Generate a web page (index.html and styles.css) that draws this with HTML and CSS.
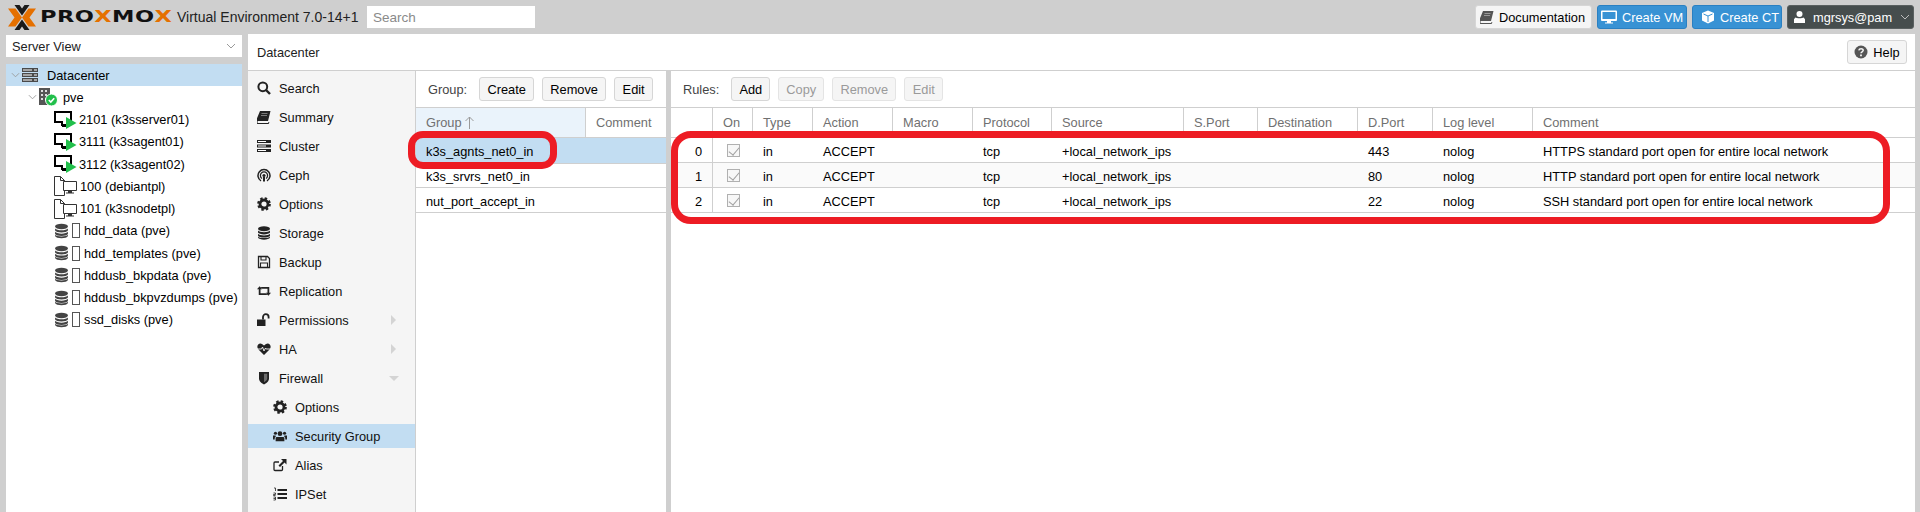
FILE: index.html
```html
<!DOCTYPE html>
<html lang="en">
<head>
  <meta charset="UTF-8" />
  <title>pve - Proxmox Virtual Environment</title>
  <link rel="stylesheet" href="styles.css">
</head>
<body>

<!-- Icon set -->
<svg class="sprite" xmlns="http://www.w3.org/2000/svg">
  <symbol id="i-search" viewBox="0 0 14 14"><circle cx="5.800" cy="5.800" r="4.400" fill="none" stroke="currentColor" stroke-width="2"/><path d="M9 9l4 4" stroke="currentColor" stroke-width="2.400"/></symbol>
  <symbol id="i-book" viewBox="0 0 14 14"><path d="M3 1h10.500l-2.500 10h-9.500c-1.500 0-1.500 2 0 2h9.500l.5-1 1 .5-1 1.500h-10.500c-2 0-2.500-2-2-3.500z" fill="currentColor"/><path d="M4.500 3.500h6M4 5.500h6" stroke="#fff" stroke-width=".8" opacity=".5"/></symbol>
  <symbol id="i-cluster" viewBox="0 0 14 14"><path d="M0 1h14v3h-14zM0 5.500h14v3h-14zM0 10h14v3h-14z" fill="currentColor"/><path d="M1 2.500h8M1 7h8M1 11.500h8" stroke="#fff" stroke-width="1"/></symbol>
  <symbol id="i-ceph" viewBox="0 0 14 14"><g fill="none" stroke="currentColor"><path d="M4 12.800a6 6 0 1 1 6 0" stroke-width="1.500"/><path d="M5 10.500a3.600 3.600 0 1 1 4 0" stroke-width="1.300"/></g><circle cx="7" cy="7.500" r="1.600" fill="currentColor"/><path d="M6 9h2v4.500h-2z" fill="currentColor"/></symbol>
  <symbol id="i-gear" viewBox="0 0 14 14"><circle cx="7" cy="7" r="4" fill="none" stroke="currentColor" stroke-width="2.800"/><circle cx="7" cy="7" r="5.700" fill="none" stroke="currentColor" stroke-width="2.300" stroke-dasharray="2.400 2.080"/></symbol>
  <symbol id="i-db" viewBox="0 0 14 14"><g fill="currentColor"><ellipse cx="7" cy="2.800" rx="6" ry="2.500"/><path d="M1 4.600c1.500 2.200 10.500 2.200 12 0v2c-1 2.400-11 2.400-12 0z"/><path d="M1 7.800c1.500 2.200 10.500 2.200 12 0v2c-1 2.400-11 2.400-12 0z"/><path d="M1 10.600c1.500 2 10.500 2 12 0v1c-1 2.800-11 2.800-12 0z"/></g></symbol>
  <symbol id="i-floppy" viewBox="0 0 14 14"><path d="M1.500 1.500h9l2 2v9h-11z" fill="none" stroke="currentColor" stroke-width="1.300"/><path d="M4 1.500h5v3.500h-5zM3.500 8h7v4.500h-7z" fill="none" stroke="currentColor" stroke-width="1.100"/></symbol>
  <symbol id="i-retweet" viewBox="0 0 16 14"><path d="M0 5l3-3.500 3 3.500h-2v4.500h6l2 2h-10v-6.500zM16 9l-3 3.500-3-3.500h2v-4.500h-6l-2-2h10v6.500z" fill="currentColor"/></symbol>
  <symbol id="i-unlock" viewBox="0 0 14 14"><path d="M0 6.500h8.500v6.500h-8.500z" fill="currentColor"/><path d="M6 6.500v-2.500a2.800 2.800 0 0 1 5.600 0v1.500" fill="none" stroke="currentColor" stroke-width="1.800"/></symbol>
  <symbol id="i-heart" viewBox="0 0 14 14"><path d="M7 13l-5.500-5.500c-3-3.500 .5-7.500 3.500-5.500l2 1.500 2-1.500c3-2 6.500 2 3.500 5.500z" fill="currentColor"/><path d="M0 7h4.500l1-2 1.500 4 1.500-3 .7 1h5" fill="none" stroke="#f5f5f5" stroke-width=".9"/></symbol>
  <symbol id="i-shield" viewBox="0 0 14 14"><path d="M2 1h10v6.500c0 3-3 5-5 6-2-1-5-3-5-6z" fill="currentColor"/><path d="M7 2.800h3.200v4.700c0 1.800-1.800 3-3.200 3.800z" fill="#f5f5f5" opacity=".35"/></symbol>
  <symbol id="i-users" viewBox="0 0 16 14"><g fill="currentColor"><circle cx="8" cy="4.300" r="2.700"/><circle cx="2.800" cy="3.800" r="1.800"/><circle cx="13.200" cy="3.800" r="1.800"/><path d="M4 8h8l1 1v4h-10v-4z"/><path d="M0 6.500h3l.2 1-1.200 1.500v2h-2zM16 6.500h-3l-.2 1 1.200 1.500v2h2z"/></g></symbol>
  <symbol id="i-external" viewBox="0 0 14 14"><path d="M9.500 8v3.500a1 1 0 0 1-1 1h-6.500a1 1 0 0 1-1-1v-6.500a1 1 0 0 1 1-1h4" fill="none" stroke="currentColor" stroke-width="1.300"/><path d="M8 1h5.500v5.500l-2-2-4.500 4.500-1.500-1.500 4.500-4.500z" fill="currentColor"/></symbol>
  <symbol id="i-list" viewBox="0 0 14 14"><path d="M4.500 2h9.500v2h-9.500zM4.500 6h9.500v2h-9.500zM4.500 10h9.500v2h-9.500z" fill="currentColor"/><path d="M1 1h1.500v3M.5 6h2v1.500h-2v1h2M.5 10h2v3h-2M.5 11.500h2" fill="none" stroke="currentColor" stroke-width=".8"/></symbol>
  <symbol id="i-help" viewBox="0 0 14 14"><circle cx="7" cy="7" r="6.500" fill="currentColor"/><path d="M4.800 5.300c.4-2.200 4.400-2.200 4.400 0 0 1.500-2.200 1.500-2.200 3" fill="none" stroke="#f5f5f5" stroke-width="1.500"/><path d="M6.100 9.500h1.800v1.700h-1.800z" fill="#f5f5f5"/></symbol>
  <symbol id="i-desktop" viewBox="0 0 16 14"><path d="M1 .5h14a1 1 0 0 1 1 1v8.500a1 1 0 0 1-1 1h-5v1.500h2v1h-8v-1h2v-1.500h-5a1 1 0 0 1-1-1v-8.500a1 1 0 0 1 1-1zM1.500 2v7h13v-7z" fill="currentColor"/></symbol>
  <symbol id="i-cube" viewBox="0 0 14 14"><path d="M7 .5l6 2.500v7.500l-6 3-6-3v-7.500z" fill="currentColor"/><path d="M2.500 4l4.500 2 4.500-2M7 6v6" fill="none" stroke="#3892d4" stroke-width="1"/></symbol>
  <symbol id="i-user" viewBox="0 0 12 14"><circle cx="6" cy="3.800" r="3.300" fill="currentColor"/><path d="M1.500 7.500c1 1 8 1 9 0l1.500 2v4h-12v-4z" fill="currentColor"/></symbol>
  <symbol id="i-datacenter" viewBox="0 0 16 14"><path d="M0 0h16v4h-16zM0 5h16v4h-16zM0 10h16v4h-16z" fill="#4a4a4a"/><path d="M1 2h9M1 7h9M1 12h9M12 2h3M12 7h3M12 12h3" stroke="#fff" stroke-width="1"/></symbol>
  <symbol id="i-node" viewBox="0 0 20 18"><path d="M1 0h11v17h-11z" fill="#555"/><path d="M3 2h2v2h-2zM7 2h2v2h-2zM3 6h2v2h-2zM7 6h2v2h-2zM3 10h2v2h-2zM7 10h2v2h-2z" fill="#ddd"/><circle cx="13.500" cy="12" r="6" fill="#21bf4b" stroke="#fff"/><path d="M10.800 12l2 2 3.400-3.700" fill="none" stroke="#fff" stroke-width="1.600"/></symbol>
  <symbol id="i-vm" viewBox="0 0 23 18"><path d="M1 1h16v10h-4v3h-5v-3h-7z" fill="none" stroke="#000" stroke-width="2"/><path d="M8 14h5v2h-5z" fill="#000"/><path d="M12 6l10.500 6-10.500 6z" fill="#21bf4b"/></symbol>
  <symbol id="i-template" viewBox="0 0 23 20"><path d="M.5 19.500v-19h6l4 4v15z" fill="#fff" stroke="#333"/><path d="M6.500 .5v4h4" fill="none" stroke="#333"/><path d="M9.500 5.500h13v9h-13z" fill="#fff" stroke="#333"/><path d="M14 14.500h4v2h2v1h-8v-1h2z" fill="#333"/></symbol>
  <symbol id="i-proxmark" viewBox="0 0 28 25"><path d="M0 3.500h7.500l6.500 9-6.500 9h-7.500l6.500-9zM28 3.500h-7.500l-6.500 9 6.500 9h7.500l-6.500-9z" fill="#e57000"/><path d="M6.500 0h5l2.500 3.500 2.500-3.500h5l-7.500 10.500zM6.500 25h5l2.500-3.500 2.500 3.500h5l-7.500-10.500z" fill="#1a1a1a"/></symbol>
  <symbol id="i-sort-up" viewBox="0 0 9 13"><path d="M4.500 13v-12M.5 5l4-4 4 4" fill="none" stroke="currentColor" stroke-width="1"/></symbol>
</svg>

<header class="topbar">
  <div class="brand">
    <svg class="brand-mark"><use href="#i-proxmark"/></svg>
    <div class="brand-name"><span>PRO<b>X</b>MO<b>X</b></span></div>
  </div>
  <div class="version">Virtual Environment 7.0-14+1</div>
  <input class="global-search" type="text" placeholder="Search" />
  <div class="top-actions">
    <button class="btn btn-docs"><svg class="ic book-ic"><use href="#i-book"/></svg>Documentation</button>
    <button class="btn btn-blue btn-vm"><svg class="ic ic-wide"><use href="#i-desktop"/></svg>Create VM</button>
    <button class="btn btn-blue btn-ct"><svg class="ic"><use href="#i-cube"/></svg>Create CT</button>
    <button class="btn btn-dark"><svg class="ic ic-user"><use href="#i-user"/></svg>mgrsys@pam<svg class="chev chev-light" viewBox="0 0 10 6"><path d="M1 1l4 4 4-4"/></svg></button>
  </div>
</header>

<div class="workspace">
  <!-- Resource tree -->
  <aside class="tree-panel">
    <div class="view-select">Server View<svg class="chev" viewBox="0 0 10 6"><path d="M1 1l4 4 4-4"/></svg></div>
    <ul class="tree">
      <li class="tree-row selected"><svg class="chev tree-chev dc-chev" viewBox="0 0 10 6"><path d="M1 1l4 4 4-4"/></svg><svg class="dc-ic"><use href="#i-datacenter"/></svg>Datacenter</li>
      <li class="tree-row"><svg class="chev tree-chev node-chev" viewBox="0 0 10 6"><path d="M1 1l4 4 4-4"/></svg><svg class="node-ic"><use href="#i-node"/></svg>pve</li>
      <li class="tree-row guest"><svg class="vm-ic"><use href="#i-vm"/></svg>2101 (k3sserver01)</li>
      <li class="tree-row guest"><svg class="vm-ic"><use href="#i-vm"/></svg>3111 (k3sagent01)</li>
      <li class="tree-row guest"><svg class="vm-ic"><use href="#i-vm"/></svg>3112 (k3sagent02)</li>
      <li class="tree-row guest"><svg class="tpl-ic"><use href="#i-template"/></svg>100 (debiantpl)</li>
      <li class="tree-row guest"><svg class="tpl-ic"><use href="#i-template"/></svg>101 (k3snodetpl)</li>
      <li class="tree-row guest"><svg class="st-ic"><use href="#i-db"/></svg><i class="st-box"></i>hdd_data (pve)</li>
      <li class="tree-row guest"><svg class="st-ic"><use href="#i-db"/></svg><i class="st-box"></i>hdd_templates (pve)</li>
      <li class="tree-row guest"><svg class="st-ic"><use href="#i-db"/></svg><i class="st-box"></i>hddusb_bkpdata (pve)</li>
      <li class="tree-row guest"><svg class="st-ic"><use href="#i-db"/></svg><i class="st-box"></i>hddusb_bkpvzdumps (pve)</li>
      <li class="tree-row guest"><svg class="st-ic"><use href="#i-db"/></svg><i class="st-box"></i>ssd_disks (pve)</li>
    </ul>
  </aside>

  <main class="content">
    <div class="content-head">
      <span>Datacenter</span>
      <button class="btn btn-help"><svg class="ic help-ic"><use href="#i-help"/></svg>Help</button>
    </div>

    <div class="content-body">
      <nav class="side-menu">
        <a class="menu-item"><svg><use href="#i-search"/></svg>Search</a>
        <a class="menu-item"><svg><use href="#i-book"/></svg>Summary</a>
        <a class="menu-item"><svg><use href="#i-cluster"/></svg>Cluster</a>
        <a class="menu-item"><svg><use href="#i-ceph"/></svg>Ceph</a>
        <a class="menu-item"><svg><use href="#i-gear"/></svg>Options</a>
        <a class="menu-item"><svg><use href="#i-db"/></svg>Storage</a>
        <a class="menu-item"><svg><use href="#i-floppy"/></svg>Backup</a>
        <a class="menu-item"><svg><use href="#i-retweet"/></svg>Replication</a>
        <a class="menu-item"><svg><use href="#i-unlock"/></svg>Permissions<i class="arrow-right"></i></a>
        <a class="menu-item"><svg><use href="#i-heart"/></svg>HA<i class="arrow-right"></i></a>
        <a class="menu-item"><svg><use href="#i-shield"/></svg>Firewall<i class="arrow-down"></i></a>
        <a class="menu-item sub"><svg><use href="#i-gear"/></svg>Options</a>
        <a class="menu-item sub active"><svg><use href="#i-users"/></svg>Security Group</a>
        <a class="menu-item sub"><svg><use href="#i-external"/></svg>Alias</a>
        <a class="menu-item sub"><svg><use href="#i-list"/></svg>IPSet</a>
      </nav>

      <section class="group-panel">
        <div class="toolbar">
          <span class="tool-label">Group:</span>
          <button class="btn tool-55">Create</button>
          <button class="btn tool-64">Remove</button>
          <button class="btn tool-39">Edit</button>
        </div>
        <table class="grid group-grid">
          <thead>
            <tr><th class="col-group">Group <svg class="sort-up"><use href="#i-sort-up"/></svg></th><th>Comment</th></tr>
          </thead>
          <tbody>
            <tr class="row-selected"><td colspan="2">k3s_agnts_net0_in</td></tr>
            <tr class="row-short"><td colspan="2">k3s_srvrs_net0_in</td></tr>
            <tr><td colspan="2">nut_port_accept_in</td></tr>
          </tbody>
        </table>
      </section>

      <section class="rules-panel">
        <div class="toolbar">
          <span class="tool-label">Rules:</span>
          <button class="btn tool-39">Add</button>
          <button class="btn tool-46" disabled>Copy</button>
          <button class="btn tool-64" disabled>Remove</button>
          <button class="btn tool-39" disabled>Edit</button>
        </div>
        <table class="grid rules-grid">
          <colgroup>
            <col class="c-num"><col class="c-on"><col class="c-type"><col class="c-action"><col class="c-macro"><col class="c-proto"><col class="c-source"><col class="c-sport"><col class="c-dest"><col class="c-dport"><col class="c-log"><col>
          </colgroup>
          <thead>
            <tr><th></th><th>On</th><th>Type</th><th>Action</th><th>Macro</th><th>Protocol</th><th>Source</th><th>S.Port</th><th>Destination</th><th>D.Port</th><th>Log level</th><th>Comment</th></tr>
          </thead>
          <tbody>
            <tr>
              <td class="num">0</td><td class="on"><i class="check"></i></td><td>in</td><td>ACCEPT</td><td></td><td>tcp</td><td>+local_network_ips</td><td></td><td></td><td>443</td><td>nolog</td><td>HTTPS standard port open for entire local network</td>
            </tr>
            <tr class="alt">
              <td class="num">1</td><td class="on"><i class="check"></i></td><td>in</td><td>ACCEPT</td><td></td><td>tcp</td><td>+local_network_ips</td><td></td><td></td><td>80</td><td>nolog</td><td>HTTP standard port open for entire local network</td>
            </tr>
            <tr>
              <td class="num">2</td><td class="on"><i class="check"></i></td><td>in</td><td>ACCEPT</td><td></td><td>tcp</td><td>+local_network_ips</td><td></td><td></td><td>22</td><td>nolog</td><td>SSH standard port open for entire local network</td>
            </tr>
          </tbody>
        </table>
      </section>
    </div>
  </main>
</div>

<!-- Red annotations drawn over the screenshot -->
<div class="mark mark-group"></div>
<div class="mark mark-rules"></div>

</body>
</html>
```

FILE: styles.css
```css
* {
  box-sizing: border-box;
}

html,
body {
  height: 100%;
}

body {
  margin: 0;
  display: flex;
  flex-direction: column;
  overflow: hidden;
  background-color: #cfcfcf;
  font-family: "Liberation Sans", Arial, sans-serif;
  font-size: 12.8px;
  color: #000;
}

.sprite {
  position: absolute;
  width: 0;
  height: 0;
}

/* Top bar */
.topbar {
  flex: 0 0 34px;
  display: flex;
  align-items: center;
  padding: 0 6px 0 8px;
}

.brand {
  display: flex;
  align-items: center;
  width: 169px;
}

.brand-mark {
  width: 28px;
  height: 25px;
  flex: none;
}

.brand-name {
  width: 132px;
  margin-left: 4px;
}

.brand-name span {
  display: inline-block;
  font-family: "DejaVu Sans", sans-serif;
  font-size: 15px;
  font-weight: 700;
  letter-spacing: 0.3px;
  color: #111;
  white-space: nowrap;
  transform: scaleX(1.5);
  transform-origin: left center;
}

.brand-name b {
  color: #e57000;
}

.version {
  width: 190px;
  font-size: 14px;
  white-space: nowrap;
  color: #222;
}

.global-search {
  width: 168px;
  height: 22px;
  padding: 0 6px;
  border: none;
  background-color: #fff;
  font-family: inherit;
  font-size: 13.5px;
}

.global-search::placeholder {
  color: #8a8a8a;
}

.top-actions {
  margin-left: auto;
  display: flex;
  gap: 5px;
}

.top-actions .btn {
  justify-content: flex-start;
}

.top-actions .btn-docs {
  width: 117px;
  padding: 0 0 0 4px;
}

.top-actions .btn-vm {
  width: 90px;
  padding: 0 0 0 3px;
}

.top-actions .btn-ct {
  width: 90px;
  padding: 0 0 0 8px;
}

.top-actions .btn-dark {
  width: 127px;
  padding: 0 0 0 6px;
}

/* Buttons */
.btn {
  height: 24px;
  padding: 0 8px;
  display: inline-flex;
  align-items: center;
  justify-content: center;
  border: 1px solid #d6d6d6;
  border-radius: 3px;
  background-color: #f5f5f5;
  font-family: inherit;
  font-size: 12.8px;
  color: #000;
  white-space: nowrap;
}

.btn:disabled {
  color: #9a9a9a;
  border-color: #e4e4e4;
}

.tool-39 { width: 39px; padding: 0; }
.tool-46 { width: 46px; padding: 0; }
.tool-55 { width: 55px; padding: 0; }
.tool-64 { width: 64px; padding: 0; }

.btn-blue {
  background-color: #3892d4;
  border-color: #2a80c2;
  color: #fff;
}

.btn-dark {
  background-color: #464d4d;
  border-color: #5a6060;
  color: #fff;
}

.btn-help {
  width: 60px;
  padding: 0;
}

.ic {
  width: 14px;
  height: 14px;
  margin-right: 5px;
  flex: none;
}

.ic-wide {
  width: 16px;
}

.ic-user {
  width: 11px;
  margin-right: 8px;
}

.book-ic,
.help-ic {
  color: #555;
}

.chev {
  width: 10px;
  height: 6px;
  fill: none;
  stroke: #9a9a9a;
  stroke-width: 1;
  flex: none;
}

.chev-light {
  margin-left: 8px;
  stroke: #bcbcbc;
}

/* Layout under the top bar */
.workspace {
  flex: 1;
  min-height: 0;
  display: flex;
  gap: 6px;
  padding: 0 5px 0 6px;
}

.tree-panel {
  width: 236px;
  flex: none;
  padding-top: 1px;
  display: flex;
  flex-direction: column;
}

.view-select {
  height: 22px;
  flex: none;
  margin-bottom: 7px;
  padding: 0 6px;
  display: flex;
  align-items: center;
  justify-content: space-between;
  background-color: #fff;
  color: #222;
}

.tree {
  flex: 1;
  margin: 0;
  padding: 0;
  list-style: none;
  background-color: #fff;
}

.tree-row {
  height: 22.25px;
  display: flex;
  align-items: center;
  white-space: nowrap;
}

.tree-row.selected {
  background-color: #c2ddf2;
}

.guest {
  padding-left: 48px;
}

.tree-chev {
  width: 9px;
}

.dc-chev {
  margin-left: 5px;
}

.dc-ic {
  width: 16px;
  height: 14px;
  margin: 0 9px 0 2px;
}

.node-chev {
  margin-left: 22px;
}

.node-ic {
  width: 20px;
  height: 18px;
  margin: 0 5px 0 1px;
}

.vm-ic {
  width: 23px;
  height: 18px;
  margin-right: 2px;
}

.tpl-ic {
  width: 23px;
  height: 20px;
  margin-right: 3px;
}

.st-ic {
  width: 15px;
  height: 16px;
  color: #444;
}

.st-box {
  width: 8px;
  height: 15px;
  margin: 0 4px 0 3px;
  border: 1px solid #555;
}

.content {
  flex: 1;
  min-width: 0;
  display: flex;
  flex-direction: column;
}

.content-head {
  flex: 0 0 37px;
  padding: 0 8px 0 9px;
  display: flex;
  align-items: center;
  justify-content: space-between;
  border-bottom: 1px solid #cfcfcf;
  background-color: #fff;
  color: #222;
}

.content-body {
  flex: 1;
  min-height: 0;
  display: flex;
}

/* Left menu */
.side-menu {
  width: 168px;
  flex: none;
  padding-top: 5px;
  background-color: #f5f5f5;
  border-right: 1px solid #cfcfcf;
}

.menu-item {
  position: relative;
  height: 24px;
  margin-bottom: 5px;
  padding-left: 9px;
  display: flex;
  align-items: center;
  color: #111;
  white-space: nowrap;
}

.menu-item svg {
  width: 14px;
  height: 14px;
  margin-right: 8px;
  color: #222;
  flex: none;
}

.menu-item.sub {
  padding-left: 25px;
}

.menu-item.active {
  background-color: #c2ddf2;
}

.arrow-right {
  position: absolute;
  right: 19px;
  width: 0;
  height: 0;
  border-style: solid;
  border-width: 5px 0 5px 5px;
  border-color: transparent transparent transparent #d4d4d4;
}

.arrow-down {
  position: absolute;
  right: 16px;
  width: 0;
  height: 0;
  border-style: solid;
  border-width: 5px 5px 0;
  border-color: #d4d4d4 transparent transparent;
}

/* Grid panels */
.group-panel {
  width: 250px;
  flex: none;
  background-color: #fff;
}

.rules-panel {
  flex: 1;
  min-width: 0;
  margin-left: 5px;
  background-color: #fff;
}

.toolbar {
  height: 36px;
  padding: 0 8px 0 12px;
  display: flex;
  align-items: center;
  gap: 8px;
}

.tool-label {
  margin-right: 4px;
  color: #444;
}

.grid {
  width: 100%;
  table-layout: fixed;
  border-collapse: separate;
  border-spacing: 0;
}

.grid th {
  height: 31px;
  padding: 0 10px;
  border-top: 1px solid #cfcfcf;
  border-right: 1px solid #cfcfcf;
  border-bottom: 1px solid #cfcfcf;
  background-color: #fff;
  font-weight: 400;
  text-align: left;
  color: #707070;
}

.grid th:last-child {
  border-right: none;
}

.grid td {
  height: 25px;
  padding: 2px 10px 0;
  border-bottom: 1px solid #cfcfcf;
  white-space: nowrap;
}

.group-grid th:first-child {
  width: 170px;
}

.group-grid .col-group {
  background-color: #eaf3fb;
}

.sort-up {
  width: 9px;
  height: 13px;
  vertical-align: -2px;
  color: #9a9a9a;
}

.group-grid .row-selected td {
  height: 26px;
  background-color: #c2ddf2;
}

.group-grid .row-short td {
  height: 24px;
}

.rules-grid .alt td {
  background-color: #fafafa;
}

.c-num { width: 42px; }
.c-on { width: 40px; }
.c-type { width: 60px; }
.c-action { width: 80px; }
.c-macro { width: 80px; }
.c-proto { width: 79px; }
.c-source { width: 132px; }
.c-sport { width: 74px; }
.c-dest { width: 100px; }
.c-dport { width: 75px; }
.c-log { width: 100px; }

.rules-grid .num {
  padding: 2px 10px 0 0;
  border-right: 1px solid #cfcfcf;
  text-align: right;
}

.rules-grid .on {
  padding: 0 0 0 14px;
}

.check {
  position: relative;
  display: block;
  width: 13px;
  height: 13px;
  border: 1px solid #b0b0b0;
  background-color: #f7f7f7;
}

.check::after {
  content: "";
  position: absolute;
  left: 3px;
  top: 0;
  width: 5px;
  height: 9px;
  border-right: 1px solid #a0a0a0;
  border-bottom: 1px solid #a0a0a0;
  transform: rotate(40deg);
}

/* Annotations */
.mark {
  position: absolute;
  border: 7px solid #ed1c24;
  pointer-events: none;
}

.mark-group {
  left: 408px;
  top: 131px;
  width: 149px;
  height: 38px;
  border-radius: 15px;
}

.mark-rules {
  left: 671px;
  top: 131px;
  width: 1219px;
  height: 93px;
  border-radius: 20px;
}
```
